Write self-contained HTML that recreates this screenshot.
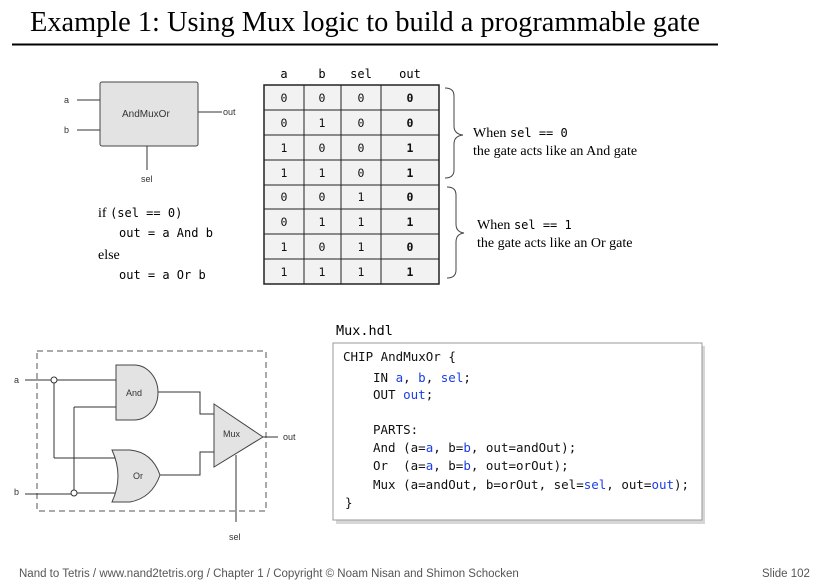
<!DOCTYPE html>
<html><head><meta charset="utf-8"><style>
html,body{margin:0;padding:0;background:#fff;}
svg{display:block}
text{white-space:pre}
.s{font-family:"Liberation Sans",sans-serif}
.r{font-family:"Liberation Serif",serif}
.m{font-family:"DejaVu Sans Mono","Liberation Mono",monospace}
</style></head><body>
<svg width="824" height="584" viewBox="0 0 824 584" xmlns="http://www.w3.org/2000/svg" xml:space="preserve">
<text x="30" y="31" class="r" font-size="28" textLength="670" lengthAdjust="spacingAndGlyphs" fill="#000">Example 1: Using Mux logic to build a programmable gate</text>
<line x1="12" y1="44.5" x2="718" y2="44.5" stroke="#000" stroke-width="2"/>

<g stroke="#333" stroke-width="1" fill="none">
<line x1="77" y1="100" x2="100" y2="100"/>
<line x1="77" y1="130" x2="100" y2="130"/>
<line x1="198" y1="112" x2="222" y2="112"/>
<line x1="147" y1="146" x2="147" y2="170"/>
</g>
<rect x="100" y="82" width="98" height="64" rx="2" fill="#e3e3e3" stroke="#444"/>
<g class="s" font-size="9" fill="#333">
<text x="122" y="117" font-size="10">AndMuxOr</text>
<text x="64" y="103">a</text><text x="64" y="133">b</text>
<text x="223" y="115">out</text><text x="141" y="182">sel</text>
</g>
<text x="98" y="217" class="r" font-size="14">if <tspan class="m" font-size="12">(sel == 0)</tspan></text>
<text x="119" y="237" class="m" font-size="12">out = a And b</text>
<text x="98" y="259" class="r" font-size="14">else</text>
<text x="119" y="279" class="m" font-size="12">out = a Or b</text>

<g class="m" font-size="12" fill="#000" text-anchor="middle">
<text x="284" y="78">a</text><text x="322" y="78">b</text><text x="361" y="78">sel</text><text x="410" y="78">out</text>
</g>
<rect x="264" y="85" width="175" height="199" fill="#f2f2f2" stroke="#222" stroke-width="1.5"/>
<g stroke="#222" stroke-width="1">
<line x1="304" y1="85" x2="304" y2="284"/><line x1="341" y1="85" x2="341" y2="284"/><line x1="381" y1="85" x2="381" y2="284"/>
<line x1="264" y1="110" x2="439" y2="110"/><line x1="264" y1="135" x2="439" y2="135"/><line x1="264" y1="160" x2="439" y2="160"/>
<line x1="264" y1="185" x2="439" y2="185"/><line x1="264" y1="209" x2="439" y2="209"/><line x1="264" y1="234" x2="439" y2="234"/><line x1="264" y1="259" x2="439" y2="259"/>
</g>
<g class="m" font-size="11.5" fill="#111" text-anchor="middle">
<text x="284" y="102">0</text><text x="322" y="102">0</text><text x="361" y="102">0</text><text x="410" y="102" font-weight="bold">0</text>
<text x="284" y="127">0</text><text x="322" y="127">1</text><text x="361" y="127">0</text><text x="410" y="127" font-weight="bold">0</text>
<text x="284" y="152">1</text><text x="322" y="152">0</text><text x="361" y="152">0</text><text x="410" y="152" font-weight="bold">1</text>
<text x="284" y="177">1</text><text x="322" y="177">1</text><text x="361" y="177">0</text><text x="410" y="177" font-weight="bold">1</text>
<text x="284" y="201">0</text><text x="322" y="201">0</text><text x="361" y="201">1</text><text x="410" y="201" font-weight="bold">0</text>
<text x="284" y="226">0</text><text x="322" y="226">1</text><text x="361" y="226">1</text><text x="410" y="226" font-weight="bold">1</text>
<text x="284" y="251">1</text><text x="322" y="251">0</text><text x="361" y="251">1</text><text x="410" y="251" font-weight="bold">0</text>
<text x="284" y="276">1</text><text x="322" y="276">1</text><text x="361" y="276">1</text><text x="410" y="276" font-weight="bold">1</text>
</g>
<g stroke="#444" fill="none" stroke-width="1">
<path d="M445 88 Q454 88 454 96 L454 126 Q454 134 463 135 Q454 136 454 144 L454 170 Q454 178 445 178"/>
<path d="M447 187 Q456 187 456 195 L456 224 Q456 232 464 233 Q456 234 456 242 L456 270 Q456 278 447 278"/>
</g>
<text x="473" y="137" class="r" font-size="14">When <tspan class="m" font-size="12">sel == 0</tspan></text>
<text x="473" y="155" class="r" font-size="14">the gate acts like an And gate</text>
<text x="477" y="229" class="r" font-size="14">When <tspan class="m" font-size="12">sel == 1</tspan></text>
<text x="477" y="247" class="r" font-size="14">the gate acts like an Or gate</text>

<rect x="37" y="351" width="229" height="160" fill="none" stroke="#555" stroke-dasharray="6,4"/>
<g stroke="#333" stroke-width="1" fill="none">
<line x1="25" y1="380" x2="51" y2="380"/>
<line x1="57" y1="380" x2="116" y2="380"/>
<line x1="54" y1="383" x2="54" y2="458"/>
<line x1="54" y1="458" x2="118" y2="458"/>
<line x1="74" y1="407" x2="116" y2="407"/>
<line x1="74" y1="407" x2="74" y2="490"/>
<line x1="25" y1="494" x2="71" y2="494"/>
<line x1="77" y1="493" x2="116" y2="493"/>
<path d="M158 392 H200 V414 H214"/>
<path d="M160 475 H200 V452 H214"/>
<line x1="263" y1="437" x2="278" y2="437"/>
<line x1="236" y1="455" x2="236" y2="522"/>
</g>
<path d="M116 365 H134 A24 27.5 0 0 1 134 420 H116 Z" fill="#e3e3e3" stroke="#444"/>
<path d="M112 450 H130 Q152 452 160 475 Q152 498 130 502 H112 Q124 476 112 450 Z" fill="#e3e3e3" stroke="#444"/>
<path d="M214 404 L263 437 L214 467 Z" fill="#e3e3e3" stroke="#444"/>
<circle cx="54" cy="380" r="3" fill="#fff" stroke="#333"/>
<circle cx="74" cy="493" r="3" fill="#fff" stroke="#333"/>
<g class="s" font-size="9" fill="#333">
<text x="126" y="396">And</text><text x="133" y="479">Or</text><text x="223" y="437">Mux</text>
<text x="14" y="383">a</text><text x="14" y="495">b</text><text x="283" y="440">out</text><text x="229" y="540">sel</text>
</g>

<text x="336" y="335" class="m" font-size="13.5">Mux.hdl</text>
<rect x="336" y="346" width="369" height="178" fill="#bbb" opacity="0.6"/>
<rect x="333" y="343" width="369" height="177" fill="#fff" stroke="#999"/>
<g class="m" font-size="12.5" fill="#111">
<text x="343" y="361">CHIP AndMuxOr {</text>
<text x="373" y="382">IN <tspan fill="#1a3ee8">a</tspan>, <tspan fill="#1a3ee8">b</tspan>, <tspan fill="#1a3ee8">sel</tspan>;</text>
<text x="373" y="399">OUT <tspan fill="#1a3ee8">out</tspan>;</text>
<text x="373" y="434">PARTS:</text>
<text x="373" y="452">And (a=<tspan fill="#1a3ee8">a</tspan>, b=<tspan fill="#1a3ee8">b</tspan>, out=andOut);</text>
<text x="373" y="470">Or  (a=<tspan fill="#1a3ee8">a</tspan>, b=<tspan fill="#1a3ee8">b</tspan>, out=orOut);</text>
<text x="373" y="489">Mux (a=andOut, b=orOut, sel=<tspan fill="#1a3ee8">sel</tspan>, out=<tspan fill="#1a3ee8">out</tspan>);</text>
<text x="345" y="507">}</text>
</g>

<text x="19" y="577" class="s" font-size="11.5" fill="#555">Nand to Tetris / www.nand2tetris.org / Chapter 1 / Copyright © Noam Nisan and Shimon Schocken</text>
<text x="762" y="577" class="s" font-size="11.5" fill="#555">Slide 102</text>
</svg>
</body></html>
